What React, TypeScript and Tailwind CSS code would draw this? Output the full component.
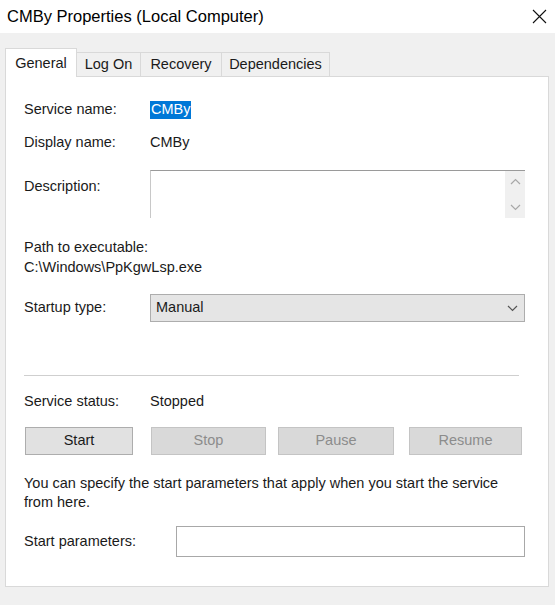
const font = { fontFamily: '"Liberation Sans", Arial, sans-serif' };

const Chevron = ({ dir, className }: { dir: "up" | "down"; className?: string }) => (
    <svg width="11" height="7" viewBox="0 0 11 7" className={className}>
        <path
            d={dir === "up" ? "M1 6 L5.5 1.5 L10 6" : "M1 1 L5.5 5.5 L10 1"}
            fill="none"
            stroke="currentColor"
            strokeWidth="1.2"
        />
    </svg>
);

const tabs = [
    { label: "General", w: "w-[72px]" },
    { label: "Log On", w: "w-[64px]" },
    { label: "Recovery", w: "w-[81px]" },
    { label: "Dependencies", w: "w-[108px]" },
];

export default function App() {
    return (
        <div className="w-[555px] h-[605px] bg-[#f0f0f0] text-[14.5px] text-[#1a1a1a] flex flex-col" style={font}>
            {/* title bar */}
            <div className="h-[33px] bg-white flex items-center justify-between pl-[7px] pr-[7px] shrink-0">
                <span className="text-[16.5px] text-black">CMBy Properties (Local Computer)</span>
                <svg width="15" height="15" viewBox="0 0 15 15" className="mr-[1px]">
                    <path d="M1 1 L14 14 M14 1 L1 14" stroke="#111" strokeWidth="1.1" />
                </svg>
            </div>

            {/* tabs */}
            <div className="flex items-end pl-[5px] pt-[15px] shrink-0">
                {tabs.map((t, i) =>
                    i === 0 ? (
                        <div
                            key={t.label}
                            className={`${t.w} h-[29px] bg-white border border-b-0 border-[#d9d9d9] flex items-center justify-center pt-[1px] -mb-px relative z-10`}
                        >
                            {t.label}
                        </div>
                    ) : (
                        <div
                            key={t.label}
                            className={`${t.w} h-[24px] bg-[#f0f0f0] border border-l-0 border-b-0 border-[#d9d9d9] flex items-center justify-center pt-[1px]`}
                        >
                            {t.label}
                        </div>
                    )
                )}
            </div>

            {/* panel */}
            <div className="ml-[5px] w-[544px] h-[511px] bg-white border border-[#d9d9d9] pl-[18px] pr-[23px] flex flex-col">
                <div className="flex items-center h-[20px] mt-[23px]">
                    <span className="w-[126px]">Service name:</span>
                    <span className="bg-[#0078d7] text-white px-[1px] h-[18px] flex items-center">CMBy</span>
                </div>
                <div className="flex items-center h-[20px] mt-[13px]">
                    <span className="w-[126px]">Display name:</span>
                    <span>CMBy</span>
                </div>
                <div className="flex mt-[17px]">
                    <span className="w-[126px] mt-[6px]">Description:</span>
                    <div className="flex-1 h-[48px] border-t border-l border-t-[#9a9a9a] border-l-[#c8c8c8] flex justify-end">
                        <div className="w-[20px] bg-[#f0f0f0] flex flex-col items-center justify-between py-[7px] text-[#a8a8a8]">
                            <Chevron dir="up" />
                            <Chevron dir="down" />
                        </div>
                    </div>
                </div>
                <div className="mt-[19px] leading-[20px]">Path to executable:</div>
                <div className="leading-[20px]">C:\Windows\PpKgwLsp.exe</div>
                <div className="flex items-center mt-[17px]">
                    <span className="w-[126px]">Startup type:</span>
                    <div className="flex-1 h-[28px] bg-[#e5e5e5] border border-[#adadad] flex items-center justify-between pl-[5px] pr-[6px]">
                        <span>Manual</span>
                        <Chevron dir="down" className="text-[#555]" />
                    </div>
                </div>
                <div className="mt-[53px] h-px bg-[#cfcfcf] mr-[6px]" />
                <div className="flex items-center h-[20px] mt-[16px]">
                    <span className="w-[126px]">Service status:</span>
                    <span>Stopped</span>
                </div>
                <div className="flex mt-[15px] gap-[12px]">
                    <div className="w-[108px] ml-[1px] h-[28px] bg-[#e1e1e1] border border-[#adadad] flex items-center justify-center">
                        Start
                    </div>
                    <div className="w-[115px] ml-[6px] h-[28px] bg-[#d9d9d9] border border-[#c4c4c4] text-[#8c8c8c] flex items-center justify-center">
                        Stop
                    </div>
                    <div className="w-[116px] h-[28px] bg-[#d9d9d9] border border-[#c4c4c4] text-[#8c8c8c] flex items-center justify-center">
                        Pause
                    </div>
                    <div className="w-[113px] ml-[3px] h-[28px] bg-[#d9d9d9] border border-[#c4c4c4] text-[#8c8c8c] flex items-center justify-center">
                        Resume
                    </div>
                </div>
                <p className="mt-[19px] leading-[19px]">
                    You can specify the start parameters that apply when you start the service from here.
                </p>
                <div className="flex items-center mt-[14px]">
                    <span className="w-[152px]">Start parameters:</span>
                    <div className="flex-1 h-[31px] bg-white border border-[#a8a8a8]" />
                </div>
            </div>
        </div>
    );
}
